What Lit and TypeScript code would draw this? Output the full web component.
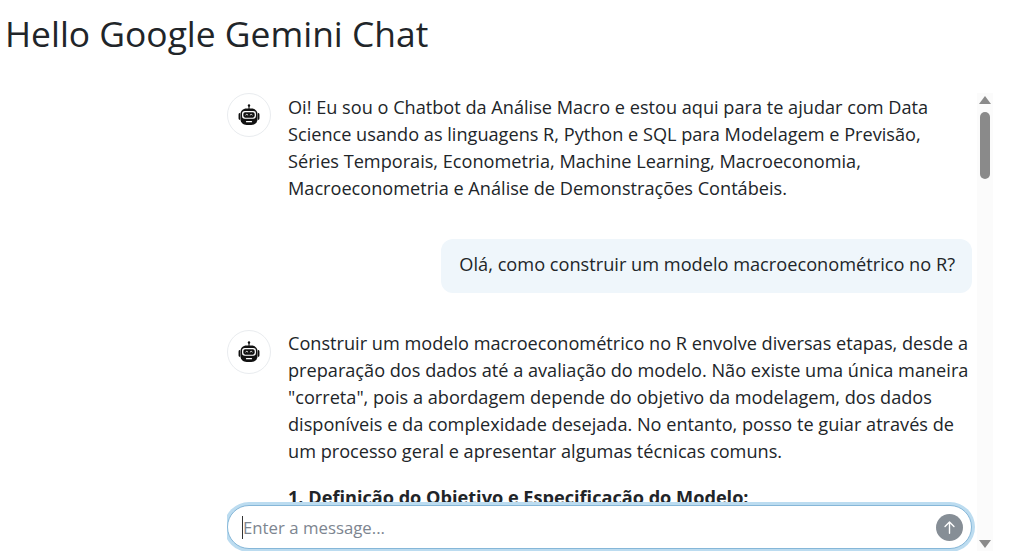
import { LitElement, html, css } from "lit";
import { customElement } from "lit/decorators.js";

const botIcon = html`<svg viewBox="0 0 24 24" width="22" height="22" aria-hidden="true">
  <circle cx="12" cy="1.6" r="1.3" fill="#111"></circle>
  <rect x="11.4" y="2" width="1.2" height="3.4" fill="#111"></rect>
  <path d="M.6 11.4a1.6 1.6 0 0 1 1.6-1.6v7.6a1.6 1.6 0 0 1-1.6-1.6zM23.4 11.4a1.6 1.6 0 0 0-1.6-1.6v7.6a1.6 1.6 0 0 0 1.6-1.6z" fill="#111"></path>
  <path d="M9.5 5h5c4.2 0 6.9 2.8 6.9 6.6v4.2c0 4.2-3 7-6.9 7h-5c-3.900 0-6.900-2.800-6.900-7v-4.200C2.600 7.800 5.300 5 9.500 5z" fill="#111"></path>
  <rect x="4.400" y="7.600" width="15.200" height="8.600" rx="3" fill="#fff"></rect>
  <rect x="5.800" y="8.900" width="12.400" height="6" rx="2" fill="#111"></rect>
  <path d="M8.200 12.200l1.400-1 1.400 1M13 12.200l1.400-1 1.400 1" fill="none" stroke="#fff" stroke-width=".9"></path>
  <rect x="8.600" y="18.600" width="6.800" height="1.400" rx=".7" fill="#fff"></rect>
</svg>`;

@customElement("app-root")
export class AppRoot extends LitElement {
  static styles = css`
    :host {
      display: block;
      height: 551px;
      overflow: hidden;
      background: #fff;
      color: #212529;
      font-family: "Open Sans", sans-serif;
    }
    h1 {
      margin: 0;
      padding: 9px 0 0 5px;
      height: 83px;
      box-sizing: border-box;
      font-size: 35.4px;
      line-height: 48px;
      font-weight: 400;
    }
    .chat {
      position: relative;
      margin-left: 227px;
      width: 766px;
      height: 468px;
      overflow: hidden;
    }
    .messages {
      width: 745px;
      display: flex;
      flex-direction: column;
      gap: 38px;
      padding-top: 10px;
      font-size: 18.15px;
      line-height: 27px;
    }
    .message {
      display: flex;
      gap: 17px;
    }
    .avatar {
      flex: none;
      width: 42px;
      height: 42px;
      border: 1px solid #e9ecef;
      border-radius: 50%;
      display: flex;
      align-items: center;
      justify-content: center;
    }
    .body.intro {
      padding-top: 1px;
      margin-bottom: -1px;
    }
    .body p {
      margin: 0 0 19px;
    }
    .body p:last-child {
      margin-bottom: 0;
    }
    .body p.heading {
      margin-bottom: 21px;
    }
    .user {
      align-self: flex-end;
      background: #eff6fb;
      border-radius: 12px;
      padding: 12px 17px 15px 18px;
      margin-bottom: -1px;
      font-size: 18.2px;
    }
    .sub {
      padding-left: 37px;
    }
    .input {
      position: absolute;
      left: 0;
      top: 422px;
      width: 745px;
      height: 44px;
      box-sizing: border-box;
      display: flex;
      align-items: center;
      justify-content: space-between;
      padding: 0 8px 0 14px;
      background: #fff;
      border: 1px solid #86b7d8;
      border-radius: 22px;
      box-shadow: 0 0 0 3px #bcdcf0;
      font-size: 16.8px;
      color: #7d8590;
    }
    .placeholder {
      border-left: 1px solid #333;
      line-height: 23px;
    }
    .send {
      width: 27px;
      height: 27px;
      border-radius: 50%;
      background: #868e96;
      display: flex;
      align-items: center;
      justify-content: center;
    }
    .scrollbar {
      position: absolute;
      top: 10px;
      right: 0;
      width: 16px;
      height: 458px;
      background: #fbfbfb;
    }
    .thumb {
      position: absolute;
      left: 3px;
      top: 19px;
      width: 10px;
      height: 67px;
      border-radius: 5px;
      background: #8a8a8a;
    }
    .arrow {
      position: absolute;
      left: 2px;
      width: 0;
      height: 0;
      border-left: 6px solid transparent;
      border-right: 6px solid transparent;
    }
    .up {
      top: 3px;
      border-bottom: 8px solid #8a8a8a;
    }
    .down {
      bottom: 3px;
      border-top: 8px solid #8a8a8a;
    }
  `;

  render() {
    return html`
      <h1>Hello Google Gemini Chat</h1>
      <div class="chat">
        <div class="messages">
          <div class="message">
            <div class="avatar">${botIcon}</div>
            <div class="body intro">
              <p>Oi! Eu sou o Chatbot da Análise Macro e estou aqui para te ajudar com Data Science usando as linguagens R, Python e SQL para Modelagem e Previsão, Séries Temporais, Econometria, Machine Learning, Macroeconomia, Macroeconometria e Análise de Demonstrações Contábeis.</p>
            </div>
          </div>
          <div class="user">Olá, como construir um modelo macroeconométrico no R?</div>
          <div class="message">
            <div class="avatar">${botIcon}</div>
            <div class="body">
              <p>Construir um modelo macroeconométrico no R envolve diversas etapas, desde a preparação dos dados até a avaliação do modelo. Não existe uma única maneira "correta", pois a abordagem depende do objetivo da modelagem, dos dados disponíveis e da complexidade desejada. No entanto, posso te guiar através de um processo geral e apresentar algumas técnicas comuns.</p>
              <p class="heading"><strong>1. Definição do Objetivo e Especificação do Modelo:</strong></p>
              <p class="sub">Objetivo: Qual a pergunta que você quer responder com o modelo? Prever</p>
            </div>
          </div>
        </div>
        <div class="input">
          <span class="placeholder">Enter a message...</span>
          <span class="send">
            <svg viewBox="0 0 16 16" width="17" height="17" fill="none" stroke="#fff" stroke-width="1.3" stroke-linecap="round" stroke-linejoin="round"><path d="M8 13.5V2.8M3.8 7L8 2.8 12.2 7"></path></svg>
          </span>
        </div>
        <div class="scrollbar">
          <div class="arrow up"></div>
          <div class="thumb"></div>
          <div class="arrow down"></div>
        </div>
      </div>
    `;
  }
}
